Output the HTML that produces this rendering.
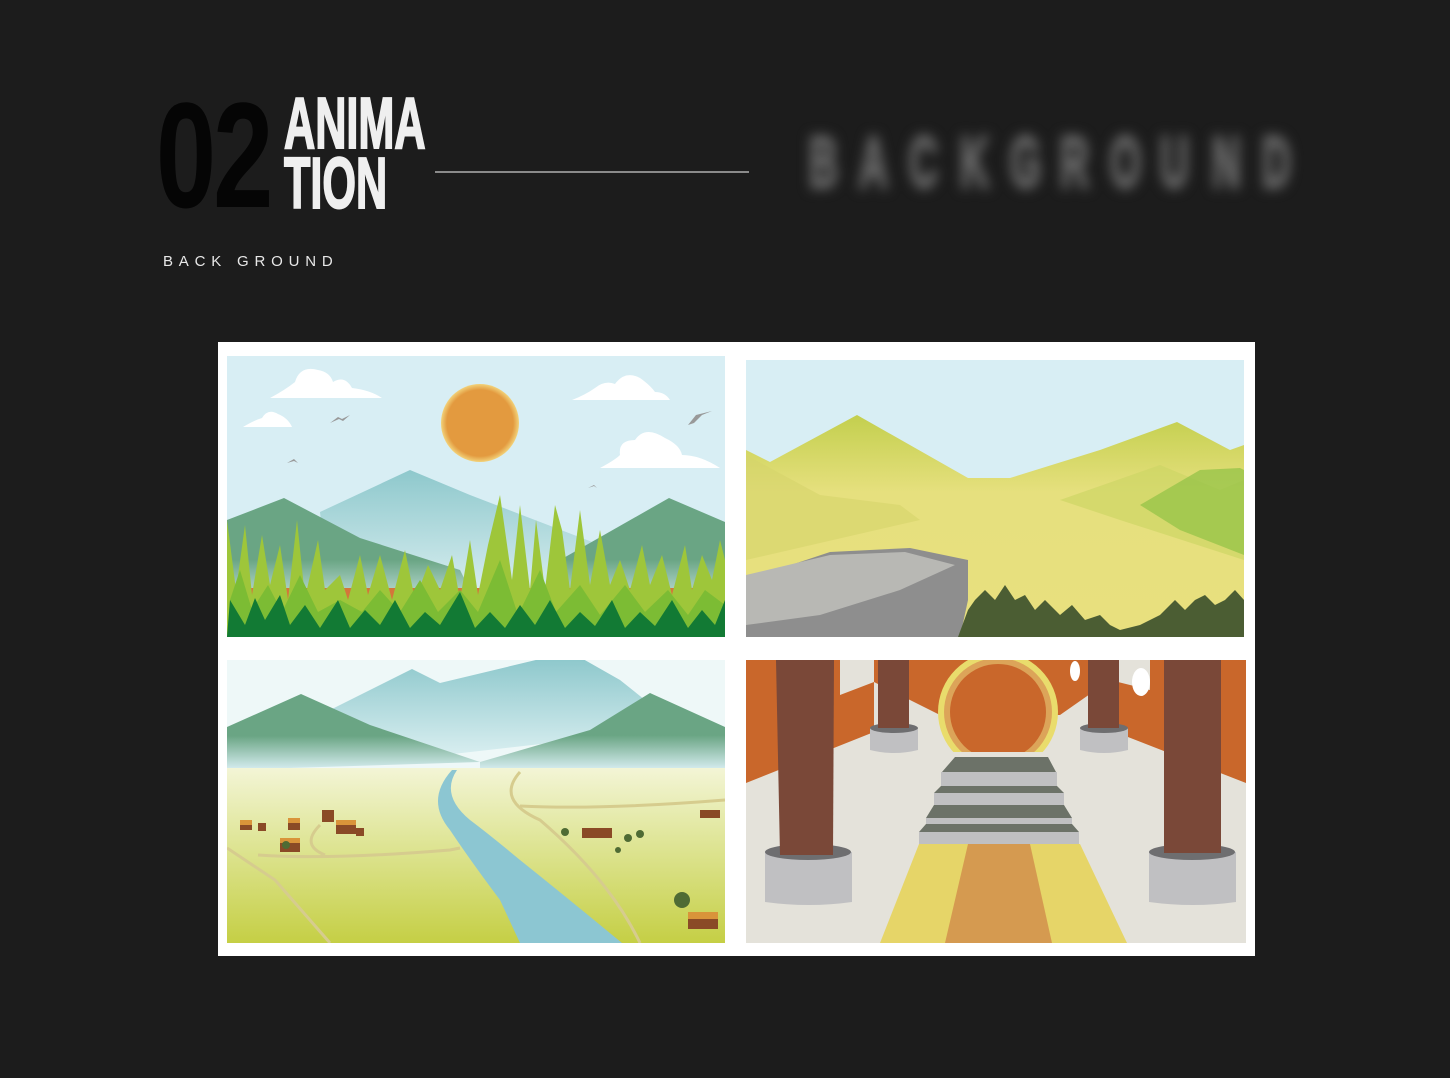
<!DOCTYPE html>
<html><head><meta charset="utf-8"><style>
html,body{margin:0;padding:0;background:#1c1c1c;}
body{width:1450px;height:1078px;position:relative;overflow:hidden;font-family:"Liberation Sans",sans-serif;}
.n02{position:absolute;left:156px;top:80px;font-family:"Liberation Sans Narrow","Liberation Sans",sans-serif;font-weight:bold;font-size:150px;line-height:150px;color:#050505;transform:scaleX(0.72);transform-origin:left top;letter-spacing:-4px;}
.anim{position:absolute;left:284px;top:94px;font-family:"Liberation Sans Narrow","Liberation Sans",sans-serif;font-weight:bold;font-size:72px;line-height:60px;color:#efefef;transform:scaleX(0.6);transform-origin:left top;letter-spacing:0px;-webkit-text-stroke:2px #efefef;}
.line{position:absolute;left:435px;top:171px;width:314px;height:2px;background:#8a8a8a;}
.bg{position:absolute;left:163px;top:253px;font-size:15px;letter-spacing:5.8px;color:#e8e8e8;}
.blur{position:absolute;top:122px;left:800px;filter:blur(6px);color:#6c6c6c;font-family:"Liberation Sans Narrow","Liberation Sans",sans-serif;font-weight:bold;font-size:72px;}
.blur span{position:absolute;top:0;width:40px;text-align:center;transform:scaleX(0.55);-webkit-text-stroke:4px #606060;}
.panel{position:absolute;left:218px;top:342px;width:1037px;height:614px;background:#fff;}
svg.ill{position:absolute;left:0;top:0;}
</style></head><body>
<div class="n02">02</div>
<div class="anim">ANIMA<br>TION</div>
<div class="line"></div>
<div class="bg">BACK GROUND</div>
<div class="blur">
<span style="left:0">B</span><span style="left:50px">A</span><span style="left:100px">C</span><span style="left:151px">K</span><span style="left:201px">G</span><span style="left:251px">R</span><span style="left:301px">O</span><span style="left:351px">U</span><span style="left:403px">N</span><span style="left:453px">D</span>
</div>
<div class="panel"></div>
<svg class="ill" width="1450" height="1078" viewBox="0 0 1450 1078">
<defs>
<clipPath id="c1"><rect x="227" y="356" width="498" height="281"/></clipPath>
<clipPath id="c2"><rect x="746" y="360" width="498" height="277"/></clipPath>
<clipPath id="c3"><rect x="227" y="660" width="498" height="283"/></clipPath>
<clipPath id="c4"><rect x="746" y="660" width="500" height="283"/></clipPath>
<linearGradient id="gm" x1="0" y1="0" x2="0" y2="1"><stop offset="0" stop-color="#6aa584"/><stop offset="0.55" stop-color="#6aa584"/><stop offset="1" stop-color="#d8eef2"/></linearGradient>
<linearGradient id="bm" x1="0" y1="0" x2="0" y2="1"><stop offset="0" stop-color="#8ec8cc"/><stop offset="1" stop-color="#dcf0f2"/></linearGradient>
<linearGradient id="field" x1="0" y1="0" x2="0" y2="1"><stop offset="0" stop-color="#f3f5d6"/><stop offset="0.4" stop-color="#e0e69a"/><stop offset="1" stop-color="#c5cf45"/></linearGradient>
<linearGradient id="hill" x1="0" y1="0" x2="0" y2="1"><stop offset="0" stop-color="#c3cf4e"/><stop offset="0.35" stop-color="#e6e07e"/><stop offset="1" stop-color="#e8e07e"/></linearGradient>
<radialGradient id="sun"><stop offset="0.85" stop-color="#e39a3f"/><stop offset="1" stop-color="#f2d27a"/></radialGradient>
</defs>
<!-- TL -->
<g clip-path="url(#c1)">
<rect x="227" y="356" width="498" height="281" fill="#d8eef4"/>
<circle cx="480" cy="423" r="39" fill="url(#sun)"/>
<g fill="#fff">
<path d="M270 398 Q285 390 295 382 Q300 365 318 370 Q330 372 333 382 Q345 375 352 388 Q370 390 382 398Z"/>
<path d="M243 427 Q255 420 262 418 Q268 408 278 414 Q288 418 292 427Z"/>
<path d="M572 400 Q585 395 595 388 Q605 380 615 384 Q625 370 640 378 Q650 385 655 392 Q665 392 670 400Z"/>
<path d="M600 468 Q615 460 620 455 Q618 440 635 440 Q645 425 665 438 Q680 445 682 455 Q700 455 720 468Z"/>
</g>
<g fill="#999" ><path d="M330 423 l8 -6 l4 2 l8 -4 l-7 6 l-4 -2z"/><path d="M287 463 l7 -4 l4 4 l8 -2 l-8 2 l-4 -2z"/><path d="M588 488 l6 -3 l3 3 l6 -1 l-6 1 l-3 -2z"/><path d="M688 425 l8 -10 l8 -2 l8 -2 l-10 4 l-8 8z"/></g>
<polygon points="320,512 410,470 470,495 600,545 560,600 330,600" fill="url(#bm)"/>
<polygon points="227,520 284,498 360,538 460,570 480,610 227,610" fill="url(#gm)"/>
<polygon points="560,560 669,498 725,522 725,610 540,610" fill="url(#gm)"/>
<rect x="227" y="588" width="498" height="20" fill="#d4763a"/>
<polygon fill="#9ec63a" points="227,637 227,520 236,590 245,525 252,595 262,535 270,585 280,545 288,600 297,520 305,598 318,540 325,590 340,575 348,600 360,555 368,595 380,555 392,600 405,550 415,600 428,565 440,590 452,555 460,600 470,540 478,595 488,545 500,495 512,580 520,505 530,590 536,520 545,590 555,505 562,530 570,590 580,510 590,585 600,530 610,585 620,560 630,590 642,545 650,585 662,555 672,595 685,545 692,590 702,555 712,580 720,540 725,560 725,637"/>
<polygon fill="#7cbc34" points="227,637 230,600 240,570 252,610 268,585 282,612 300,575 318,612 340,600 362,612 380,590 400,612 420,580 438,612 460,590 478,612 500,560 518,615 540,570 556,612 580,585 600,615 625,585 645,612 668,590 688,615 705,590 725,605 725,637"/>
<polygon fill="#127a34" points="227,637 230,600 245,625 255,598 265,620 280,595 290,625 305,605 320,628 338,600 350,628 365,610 380,625 395,600 410,628 425,612 440,625 460,592 475,628 490,612 505,628 520,605 535,625 550,600 565,628 580,612 595,626 612,600 625,628 640,612 655,626 672,600 688,628 702,610 715,625 725,600 725,637"/>
</g>
<!-- TR -->
<g clip-path="url(#c2)">
<rect x="746" y="360" width="498" height="277" fill="#d8eef4"/>
<polygon points="746,450 770,462 857,415 968,478 1010,478 1100,450 1177,422 1230,450 1244,445 1244,637 746,637" fill="url(#hill)"/>
<polygon points="746,455 820,495 900,505 920,520 746,560" fill="#d6d46a" opacity="0.6"/>
<polygon points="1060,500 1160,465 1220,490 1244,480 1244,560 1120,520" fill="#cdd565" opacity="0.7"/>
<polygon points="1140,505 1200,470 1240,468 1244,470 1244,555 1180,530" fill="#98c44a" opacity="0.8"/>
<polygon points="746,580 830,552 910,548 968,560 968,600 960,637 746,637" fill="#8e8e8e"/>
<polygon points="746,575 830,555 905,552 955,565 900,590 820,615 746,625" fill="#b8b8b4"/>
<polygon points="958,637 968,610 975,600 985,590 995,600 1005,585 1015,600 1025,595 1035,610 1045,600 1060,615 1072,605 1085,620 1100,615 1110,625 1120,630 1140,625 1160,615 1175,600 1185,610 1195,600 1205,595 1215,605 1225,600 1235,590 1244,600 1244,637" fill="#4b5d33"/>
</g>
<!-- BL -->
<g clip-path="url(#c3)">
<rect x="227" y="660" width="498" height="283" fill="#eef8f8"/>
<polygon points="330,710 412,669 440,683 540,659 583,659 620,680 645,700 620,735 400,760 330,760" fill="url(#bm)"/>
<polygon points="227,727 301,694 370,725 480,762 227,770" fill="url(#gm)"/>
<polygon points="480,762 590,730 650,693 725,727 725,770 480,770" fill="url(#gm)"/>
<rect x="227" y="768" width="498" height="175" fill="url(#field)"/>
<g fill="none" stroke="#d6cc8e" stroke-width="3"><path d="M227 848 L275 880 L330 943"/><path d="M258 855 Q330 860 450 850 L460 848"/><path d="M320 825 Q300 845 325 855"/><path d="M520 772 Q495 800 540 820 Q610 880 640 943"/><path d="M520 806 Q600 810 725 800"/></g>
<path d="M457 770 L452 770 Q425 800 450 830 Q470 860 500 900 L520 943 L622 943 Q570 900 520 860 Q490 835 470 820 Q440 795 457 770Z" fill="#8cc6d2"/>
<g fill="#8a4a26"><rect x="240" y="820" width="12" height="10"/><rect x="258" y="823" width="8" height="8"/><rect x="288" y="818" width="12" height="12"/><rect x="280" y="838" width="20" height="14"/><rect x="322" y="810" width="12" height="12"/><rect x="336" y="820" width="20" height="14"/><rect x="356" y="828" width="8" height="8"/><rect x="582" y="828" width="30" height="10"/><rect x="700" y="810" width="20" height="8"/><rect x="688" y="915" width="30" height="14"/></g>
<g fill="#d9943a"><rect x="240" y="820" width="12" height="5"/><rect x="288" y="818" width="12" height="5"/><rect x="280" y="838" width="20" height="5"/><rect x="336" y="820" width="20" height="5"/><rect x="688" y="912" width="30" height="7"/></g>
<g fill="#4f6b34"><circle cx="565" cy="832" r="4"/><circle cx="628" cy="838" r="4"/><circle cx="640" cy="834" r="4"/><circle cx="618" cy="850" r="3"/><circle cx="682" cy="900" r="8"/><circle cx="286" cy="845" r="4"/></g>
</g>
<!-- BR -->
<g clip-path="url(#c4)">
<rect x="746" y="660" width="500" height="283" fill="#e4e2da"/>
<polygon points="746,660 840,660 840,695 874,682 874,732 746,783" fill="#c9672b"/>
<polygon points="1246,660 1150,660 1150,690 1110,680 1110,730 1246,783" fill="#c9672b"/>
<polygon points="874,660 1110,660 1110,680 1060,715 940,715 874,682" fill="#c9672b"/>
<ellipse cx="1075" cy="671" rx="5" ry="10" fill="#fff"/>
<ellipse cx="1141" cy="682" rx="9" ry="14" fill="#fff"/>
<circle cx="998" cy="712" r="60" fill="#e9dc6c"/>
<circle cx="998" cy="712" r="54" fill="#dca459"/>
<circle cx="998" cy="712" r="48" fill="#c9672b"/>
<rect x="930" y="752" width="140" height="10" fill="#e4e2da"/>
<polygon points="955,757 1048,757 1056,772 942,772" fill="#6c7268"/>
<rect x="941" y="772" width="116" height="14" fill="#c0c0c2"/>
<polygon points="941,786 1057,786 1064,793 934,793" fill="#6c7268"/>
<rect x="934" y="793" width="130" height="12" fill="#c0c0c2"/>
<polygon points="934,805 1064,805 1072,818 926,818" fill="#6c7268"/>
<rect x="926" y="818" width="146" height="6" fill="#c0c0c2"/>
<polygon points="926,824 1072,824 1079,832 919,832" fill="#6c7268"/>
<rect x="919" y="832" width="160" height="12" fill="#c0c0c2"/>
<polygon points="919,844 1080,844 1127,943 880,943" fill="#e6d568"/>
<polygon points="968,844 1030,844 1052,943 945,943" fill="#d59a50"/>
<g fill="#c0c0c2"><path d="M870 728 h48 v22 q-24 6 -48 0z"/><path d="M1080 728 h48 v22 q-24 6 -48 0z"/><path d="M765 852 h87 v50 q-43 6 -87 0z"/><path d="M1149 852 h87 v50 q-43 6 -87 0z"/></g>
<g fill="#6e6e70"><ellipse cx="894" cy="728" rx="24" ry="5"/><ellipse cx="1104" cy="728" rx="24" ry="5"/><ellipse cx="808" cy="852" rx="43" ry="8"/><ellipse cx="1192" cy="852" rx="43" ry="8"/></g>
<g fill="#7a4838"><rect x="878" y="660" width="31" height="68"/><rect x="1088" y="660" width="31" height="68"/><polygon points="776,660 834,660 833,855 780,855"/><rect x="1164" y="660" width="57" height="193"/></g>
</g>
</svg>
</body></html>
